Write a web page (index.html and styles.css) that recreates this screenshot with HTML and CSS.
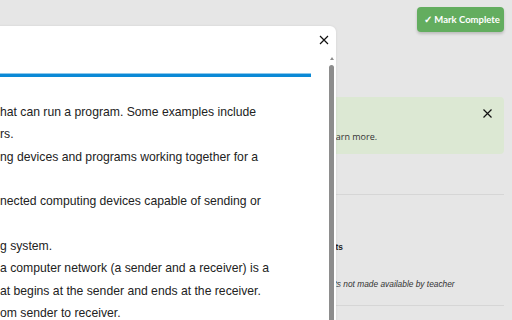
FILE: index.html
```html
<!DOCTYPE html>
<html>
<head>
<meta charset="utf-8">
<link rel="stylesheet" href="styles.css">
</head>
<body>
<div class="page">
  <div class="topbar">
    <button class="complete-btn">✓ Mark Complete</button>
  </div>
  <div class="side">
    <div class="alert">
      <div class="alert-head">
        <svg class="alert-close" width="9" height="9" viewBox="0 0 9 9"><path d="M0.5 0.5 L8.5 8.5 M8.5 0.5 L0.5 8.5" stroke="#111" stroke-width="1.2"/></svg>
      </div>
      <div class="alert-text">Learn more.</div>
    </div>
    <div class="section section-top"></div>
    <div class="section">
      <div class="sec-title">Hints</div>
      <div class="sec-note">Hints not made available by teacher</div>
    </div>
  </div>
</div>

<div class="modal">
  <div class="modal-head">
    <svg class="modal-close" width="10" height="10" viewBox="0 0 10 10"><path d="M1 1 L9 9 M9 1 L1 9" stroke="#111" stroke-width="1.2"/></svg>
  </div>
  <div class="modal-body">
    <div class="modal-content">
      <div class="progress"></div>
      <div class="lines">
        <div class="line">hat can run a program. Some examples include</div>
        <div class="line">rs.</div>
        <div class="line">ng devices and programs working together for a</div>
        <div class="line"></div>
        <div class="line">nected computing devices capable of sending or</div>
        <div class="line"></div>
        <div class="line">g system.</div>
        <div class="line">a computer network (a sender and a receiver) is a</div>
        <div class="line">at begins at the sender and ends at the receiver.</div>
        <div class="line">om sender to receiver.</div>
      </div>
    </div>
    <div class="scrollbar">
      <div class="sb-arrow"></div>
      <div class="sb-thumb"></div>
    </div>
  </div>
</div>
</body>
</html>
```
FILE: styles.css
```css
html, body {
  margin: 0;
  padding: 0;
  width: 512px;
  height: 320px;
  overflow: hidden;
  background: #e6e6e6;
}
.page {
  padding: 7px 8px 0 0;
  display: flex;
  flex-direction: column;
}
.topbar {
  display: flex;
  justify-content: flex-end;
}
.complete-btn {
  width: 87px;
  height: 25px;
  border: none;
  border-radius: 4px;
  background: #63ad5f;
  color: #fff;
  font-family: Lato, "Open Sans", sans-serif;
  font-weight: 700;
  font-size: 9.5px;
  padding: 0 0 0 3px;
  box-shadow: 0 2px 3px rgba(0,0,0,0.18);
}
.side {
  margin-left: 310px;
  margin-top: 65px;
  display: flex;
  flex-direction: column;
}
.alert {
  background: #dce8d3;
  border-radius: 4px;
  padding: 8px 12px 10px 16px;
  display: flex;
  flex-direction: column;
  gap: 8px;
  font-family: "Open Sans", sans-serif;
  color: #333;
}
.alert-head {
  height: 16px;
  display: flex;
  align-items: center;
  justify-content: flex-end;
}
.alert-close {
  display: block;
}
.alert-text {
  font-size: 9px;
  line-height: 15px;
}
.section-top {
  height: 40px;
  border-bottom: 1px solid #d6d6d6;
}
.section {
  padding-left: 12px;
  font-family: "Liberation Sans", Arial, sans-serif;
  color: #222;
  border-bottom: 1px solid #d6d6d6;
}
.section:last-child {
  padding-top: 46px;
  padding-bottom: 15px;
}
.sec-title {
  font-weight: 700;
  font-size: 8.4px;
  line-height: 12px;
}
.sec-note {
  margin-top: 25px;
  font-style: italic;
  font-size: 8.35px;
  line-height: 12px;
  color: #333;
}
.modal {
  position: absolute;
  left: -40px;
  top: 26px;
  width: 376px;
  height: 320px;
  background: #fff;
  border-radius: 0 6px 0 0;
  display: flex;
  flex-direction: column;
  box-shadow: 0 0 3px rgba(0,0,0,0.08);
}
.modal-head {
  height: 28px;
  display: flex;
  justify-content: flex-end;
  align-items: center;
  padding-right: 7px;
}
.modal-close {
  display: block;
}
.modal-body {
  flex: 1;
  display: flex;
}
.modal-content {
  flex: 1;
  padding: 20px 17px 0 40px;
  overflow: hidden;
}
.progress {
  height: 3px;
  background: #0b89d6;
  box-shadow: 0 -1px 0 #8cc8ec;
  margin-left: -40px;
}
.lines {
  margin-top: 24px;
  font-family: "Liberation Sans", Arial, sans-serif;
  font-size: 12.2px;
  color: #222;
}
.line {
  height: 22.33px;
  line-height: 22.33px;
  white-space: nowrap;
}
.scrollbar {
  width: 5px;
  padding: 3px 2px 0 1px;
  display: flex;
  flex-direction: column;
  align-items: center;
}
.sb-arrow {
  width: 0;
  height: 0;
  border-left: 2.5px solid transparent;
  border-right: 2.5px solid transparent;
  border-bottom: 3px solid #8d8d8d;
}
.sb-thumb {
  margin-top: 5px;
  width: 5px;
  flex: 1;
  background: #8d8d8d;
  border-radius: 2.5px 2.5px 0 0;
}
```
